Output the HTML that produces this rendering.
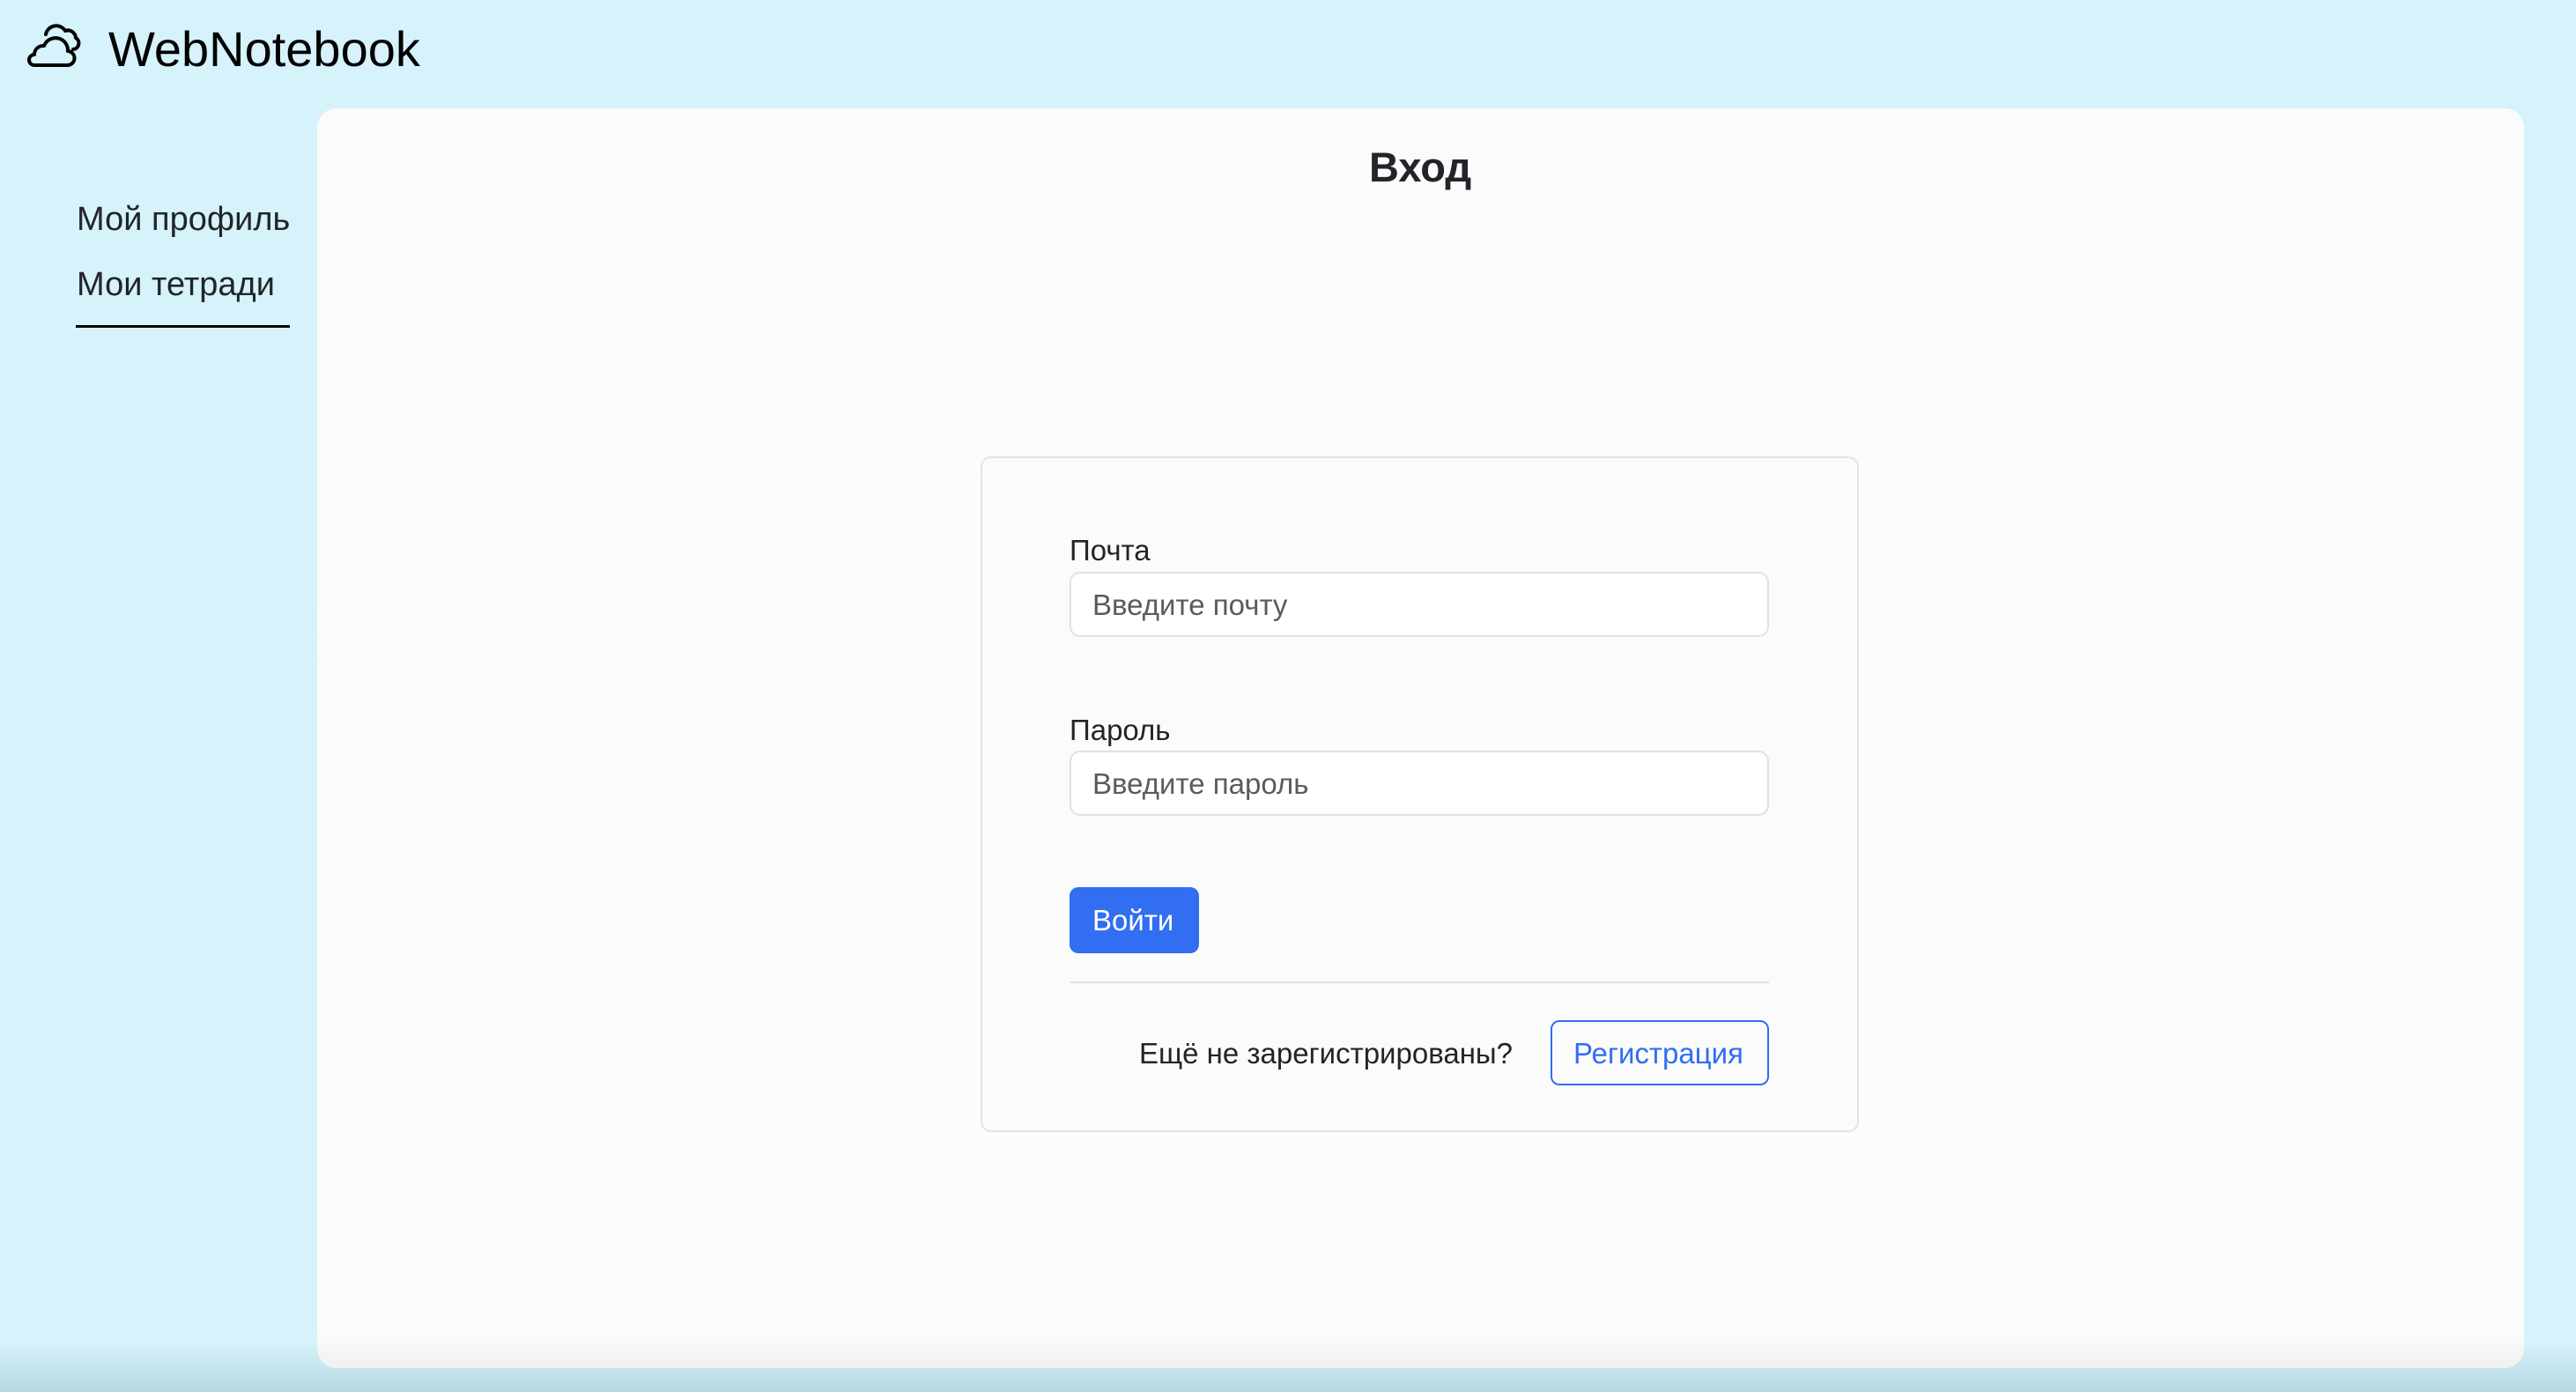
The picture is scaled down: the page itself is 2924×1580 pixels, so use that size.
<!DOCTYPE html>
<html><head><meta charset="utf-8"><style>
*{margin:0;padding:0;box-sizing:border-box}
html,body{width:2924px;height:1580px;overflow:hidden}
body{background:#d6f2fa;font-family:"Liberation Sans","DejaVu Sans",sans-serif;color:#212529;position:relative}
.abs{position:absolute}
.shade{left:0;right:0;top:1525px;height:55px;background:linear-gradient(to bottom,rgba(160,200,210,0),rgba(150,190,200,0.5))}
.panel{left:360px;top:123px;width:2505px;height:1430px;background:linear-gradient(to bottom,#fbfbfb 0%,#fcfcfc 97%,#f0f0f0 100%);border-radius:22px}
.t{white-space:nowrap;line-height:1}
.card{left:1113px;top:518px;width:997px;height:767px;border:2px solid #e3e4e6;border-radius:12px;background:#fbfbfb}
.inp{left:1214px;width:794px;height:74px;border:2px solid #dfe1e4;border-radius:12px;background:#fff}
.f{font-size:33px}
</style></head><body>
<div class="abs shade"></div>
<svg class="abs" style="left:26px;top:26px" width="68" height="52" viewBox="0 0 68 52" fill="none" stroke="#000" stroke-width="4" stroke-linecap="round" stroke-linejoin="round">
<path d="M13 48 H50 a8 8 0 0 0 1-16 a14 14 0 0 0-27-6 a10 10 0 0 0-11 10 a6 6 0 0 0 0 12 Z"/>
<path d="M26 13 a12 12 0 0 1 22-4 a9 9 0 0 1 12 8 a7 7 0 0 1-3 13"/>
</svg>
<div class="abs t" style="left:123px;top:28px;font-size:56px;color:#000">WebNotebook</div>
<div class="abs t" style="left:87px;top:230px;font-size:38px">Мой профиль</div>
<div class="abs t" style="left:87px;top:304px;font-size:38px">Мои тетради</div>
<div class="abs" style="left:86px;top:369px;width:243px;height:3px;background:#000"></div>
<div class="abs panel"></div>
<div class="abs t" style="left:1554px;top:166px;font-size:47px;font-weight:bold">Вход</div>
<div class="abs card"></div>
<div class="abs t f" style="left:1214px;top:608px">Почта</div>
<div class="abs inp" style="top:649px"></div>
<div class="abs t f" style="left:1240px;top:670px;color:#595c5f">Введите почту</div>
<div class="abs t f" style="left:1214px;top:812px">Пароль</div>
<div class="abs inp" style="top:852px"></div>
<div class="abs t f" style="left:1240px;top:873px;color:#595c5f">Введите пароль</div>
<div class="abs" style="left:1214px;top:1007px;width:147px;height:75px;background:#316ef2;border-radius:10px"></div>
<div class="abs t f" style="left:1240px;top:1028px;color:#fff">Войти</div>
<div class="abs" style="left:1214px;top:1114px;width:794px;height:2px;background:#dee0e3"></div>
<div class="abs t f" style="left:1293px;top:1179px">Ещё не зарегистрированы?</div>
<div class="abs" style="left:1760px;top:1158px;width:248px;height:74px;border:2px solid #316ef2;border-radius:10px"></div>
<div class="abs t f" style="left:1786px;top:1179px;color:#316ef2">Регистрация</div>
</body></html>
